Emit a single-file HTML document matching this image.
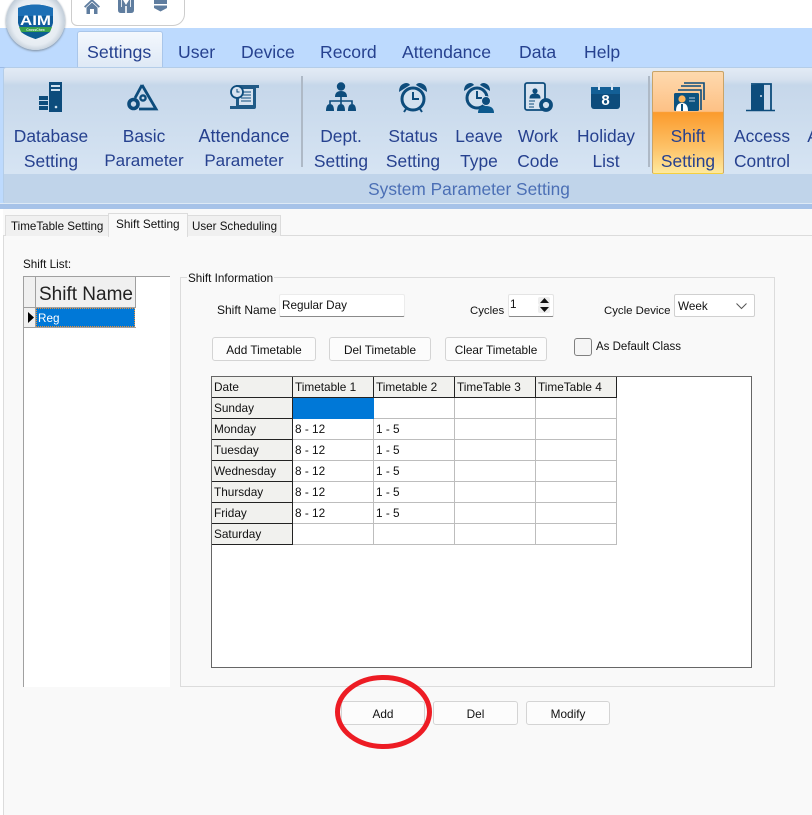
<!DOCTYPE html>
<html><head><meta charset="utf-8">
<style>
html,body{margin:0;padding:0}
body{width:812px;height:815px;position:relative;overflow:hidden;background:#fff;font-family:"Liberation Sans",sans-serif;color:#111}
.a{position:absolute;box-sizing:border-box}
.t{position:absolute;white-space:nowrap;font-size:11.7px;line-height:18px;margin-top:0}
.rt{position:absolute;white-space:nowrap;font-size:17.4px;line-height:20px;color:#26418f;text-align:center;transform:translateX(-50%)}
.mt{position:absolute;white-space:nowrap;font-size:17.6px;line-height:22px;color:#26418f;top:41px}
.btn{position:absolute;box-sizing:border-box;background:#fcfcfc;border:1px solid #d4d4d4;border-radius:3px;font-size:11.8px;text-align:center;color:#111;white-space:nowrap}
svg{position:absolute;overflow:visible}
table{position:absolute;left:212px;top:377px;border-collapse:separate;border-spacing:0;table-layout:fixed;width:405px}
td{box-sizing:border-box;width:81px;height:21px;padding:0 0 0 2px;font-size:11.8px;line-height:20px;border-right:1px solid #bdbdbd;border-bottom:1px solid #bdbdbd;background:#fff;white-space:nowrap;overflow:hidden}
td.h{background:#f1f1ee;border-right:1px solid #222;border-bottom:1px solid #222}
</style></head><body>

<!-- top band -->
<div class="a" style="left:71px;top:-6px;width:114px;height:32px;background:#fff;border:1px solid #cdcdcd;border-radius:0 0 12px 6px"></div>
<div class="a" style="left:0;top:28px;width:812px;height:181px;background:#bddafe"></div>
<div class="a" style="left:0;top:67px;width:812px;height:1px;background:#9dbbe6"></div>
<!-- qat icons -->
<svg style="left:84px;top:0" width="16" height="14" viewBox="0 0 16 14"><path d="M0 6.500 8-1l8 7.500-1.300 1.200L8 1.500 1.300 7.700z" fill="#5f7d9f"/><path d="M2.500 7.500 8 2.500l5.500 5V14H10V9H6v5H2.500z" fill="#5f7d9f"/></svg>
<svg style="left:118px;top:0" width="16" height="14" viewBox="0 0 16 14"><path d="M0 0h5l3 5 3-5h5v10q0 3-3 3H3q-3 0-3-3z" fill="#5f7d9f"/><path d="M7 6h2v7H7zM3 0h1v7H3zM12 0h1v7h-1z" fill="#dfe6ee"/></svg>
<svg style="left:154px;top:0" width="13" height="12" viewBox="0 0 13 12"><path d="M0 0h13v4H0zM0 5.500h13V8l-6.500 3.500L0 8z" fill="#5f7d9f"/></svg>

<!-- Settings tab -->
<div class="a" style="left:77px;top:31px;width:86px;height:38px;border:1px solid #a9c6ea;border-bottom:none;border-radius:3px 3px 0 0;background:linear-gradient(#f4f8fd,#dde8f5)"></div>
<div class="mt" style="left:87px;font-size:17.8px">Settings</div>
<div class="mt" style="left:178px">User</div>
<div class="mt" style="left:241px">Device</div>
<div class="mt" style="left:320px">Record</div>
<div class="mt" style="left:402px">Attendance</div>
<div class="mt" style="left:519px">Data</div>
<div class="mt" style="left:584px">Help</div>

<!-- logo -->
<div class="a" style="left:6px;top:-9px;width:59px;height:59px;border-radius:50%;background:radial-gradient(circle at 50% 52%,#f6f8fa 0,#e6ecf2 55%,#a4b4c4 82%,#7e8fa0 100%);box-shadow:0 1px 2px #7d8c9c"></div>
<svg style="left:18px;top:3px" width="35" height="36" viewBox="0 0 35 36">
<path d="M0 5Q17-2 35 5V20Q33 30 17.500 36 2 30 0 20z" fill="#0f5c9c"/>
<path d="M0 5Q17-2 35 5V13H0z" fill="#1c6fb5"/>
<path d="M1 24h33l-2 5H3z" fill="#3aa14c"/>
<path d="M3 29h29q-5 4-14.500 7Q8 33 3 29z" fill="#0c5d92"/>
<text x="17.500" y="22" font-size="14" font-weight="700" text-anchor="middle" textLength="31" lengthAdjust="spacingAndGlyphs" fill="#fff" font-family="Liberation Sans">AIM</text>
<text x="17.500" y="28" font-size="3.500" font-weight="700" text-anchor="middle" fill="#e8f5e8" font-family="Liberation Sans">CrossChex</text>
</svg>

<!-- ribbon -->
<div class="a" style="left:3px;top:67px;width:815px;height:137px;border:1px solid #b4cde8;border-radius:3px;background:linear-gradient(#e3ebf5 0,#d7e2ef 11px,#c6d7ea 17px,#d6e4f3 105px);overflow:hidden">
 <div class="a" style="left:0;top:106px;width:100%;height:30px;background:#c0d4ea"></div>
</div>
<div class="a" style="left:0;top:203px;width:812px;height:1px;background:#dde9f5"></div>
<div class="a" style="left:0;top:204px;width:812px;height:5px;background:#a6c2e8"></div>
<div class="a" style="left:301px;top:76px;width:2px;height:91px;background:#aeb9c6"></div>
<div class="a" style="left:648px;top:76px;width:2px;height:91px;background:#aeb9c6"></div>
<!-- highlight -->
<div class="a" style="left:652px;top:71px;width:72px;height:103px;border:1px solid #c9a468;border-bottom:1px solid #f5cf3f;border-radius:2px;background:linear-gradient(#fed9ae 0,#fdc185 39%,#fb9b2d 40%,#fdc268 75%,#fee99d 100%)"></div>

<!-- ribbon icons -->
<svg style="left:39px;top:82px" width="24" height="31" viewBox="0 0 24 31"><path d="M10 0h13v30H10z" fill="#0d4c7c"/><path d="M12 3h9v2h-9zM12 7h9v2h-9z" fill="#cfe0ee"/><circle cx="17" cy="25" r="1.300" fill="#cfe0ee"/><path d="M0 14h9v4H0zM0 19h9v4H0zM0 24h9v4H0z" fill="#0d4c7c"/></svg>
<svg style="left:127px;top:83px" width="31" height="30" viewBox="0 0 31 30"><path d="M15 2 29 26H12" fill="none" stroke="#0d4c7c" stroke-width="2.800"/><path d="M15 2 8 15" fill="none" stroke="#0d4c7c" stroke-width="2.800"/><circle cx="6.500" cy="21" r="4.500" fill="#c9d9ea" stroke="#0d4c7c" stroke-width="3.600"/><circle cx="16" cy="15" r="2.600" fill="#c9d9ea" stroke="#0d4c7c" stroke-width="2.400"/></svg>
<svg style="left:229px;top:84px" width="31" height="26" viewBox="0 0 31 26"><path d="M7 1h23v3h-3v19q0 2-2 2H1v-3h6z" fill="#0d4c7c" opacity=".9"/><path d="M10 5h14v16H10z" fill="#d7e3f0"/><path d="M12 8h10M12 11h10M12 14h10M12 17h10" stroke="#0d4c7c"/><circle cx="8" cy="8" r="6" fill="#d7e3f0" stroke="#0d4c7c" stroke-width="1.800"/><path d="M8 5v3h2.500" fill="none" stroke="#0d4c7c"/></svg>
<svg style="left:326px;top:82px" width="30" height="30" viewBox="0 0 30 30"><circle cx="15" cy="4.500" r="4.200" fill="#0d4c7c"/><path d="M9 15q0-6 6-6t6 6z" fill="#0d4c7c"/><path d="M15 14v6M4 22v-3h22v3M15 19v3" fill="none" stroke="#0d4c7c" stroke-width="1.600"/><path d="M0 29q0-7 4-7t4 7zM11 29q0-7 4-7t4 7zM22 29q0-7 4-7t4 7z" fill="#0d4c7c"/></svg>
<svg style="left:398px;top:82px" width="30" height="31" viewBox="0 0 30 31"><circle cx="15" cy="17" r="11" fill="#d3e1ef" stroke="#0d4c7c" stroke-width="3"/><path d="M15 10v7h6" fill="none" stroke="#0d4c7c" stroke-width="2"/><path d="M1 10Q1 2 8 1q3 0 4 2zM29 10q0-8-7-9-3 0-4 2z" fill="#0d4c7c"/><path d="M8 27l-2 3M22 27l2 3" stroke="#0d4c7c" stroke-width="2"/></svg>
<svg style="left:463px;top:82px" width="31" height="31" viewBox="0 0 31 31"><circle cx="14" cy="16" r="10" fill="#d3e1ef" stroke="#0d4c7c" stroke-width="3"/><path d="M14 9v7h5" fill="none" stroke="#0d4c7c" stroke-width="2"/><path d="M1 9Q1 2 7 1q3 0 4 2zM27 9q0-7-6-8-3 0-4 2z" fill="#0d4c7c"/><circle cx="23" cy="19" r="4.500" fill="#0d4c7c" stroke="#d3e1ef"/><path d="M15 31q0-7 8-7t8 7z" fill="#0d5a8e"/></svg>
<svg style="left:524px;top:82px" width="32" height="31" viewBox="0 0 32 31"><rect x="1" y="1" width="20" height="27" rx="2" fill="#d7e3f0" stroke="#0d4c7c" stroke-width="1.800"/><circle cx="11" cy="9" r="2.600" fill="#0d4c7c"/><path d="M6 16q0-4 5-4t5 4zM5 19h6M5 22h5M5 25h5" fill="#0d4c7c" stroke="#0d4c7c"/><circle cx="22" cy="23" r="5" fill="#d3e1ef" stroke="#0d4c7c" stroke-width="3.800"/></svg>
<svg style="left:590px;top:83px" width="31" height="27" viewBox="0 0 31 27"><rect x="1" y="4" width="29" height="22" rx="3" fill="#0d4c7c"/><path d="M1 4h29v7H1z" fill="#135f96"/><path d="M9 0v7M22 0v7" stroke="#d7e3f0" stroke-width="2"/><text x="15.500" y="22" font-size="15" font-weight="700" text-anchor="middle" fill="#fff" font-family="Liberation Sans">8</text></svg>
<svg style="left:673px;top:83px" width="32" height="29" viewBox="0 0 32 29"><path d="M11 0h20v17M8 3h20" fill="none" stroke="#0d4c7c" stroke-width="1.600"/><path d="M5 7h23v20" fill="none" stroke="#0d4c7c" stroke-width="1.600"/><rect x="1" y="10" width="25" height="18" rx="1.500" fill="#0d527f"/><circle cx="9" cy="16" r="3.600" fill="#fdb45c"/><path d="M3 28q0-8 6-8t6 8z" fill="#fff"/><path d="M9 21v7" stroke="#0d527f" stroke-width="2"/><path d="M16 15h6M16 18h6" stroke="#bcd" /></svg>
<svg style="left:746px;top:83px" width="30" height="29" viewBox="0 0 30 29"><path d="M5 27V2l13-1v26z" fill="#0d4c7c"/><path d="M5 1h20v26" fill="none" stroke="#0d4c7c" stroke-width="1.800"/><path d="M0 27.500h29" stroke="#0d4c7c" stroke-width="1.600"/><circle cx="15" cy="13" r="1" fill="#d7e3f0"/></svg>

<!-- ribbon text -->
<div class="rt" style="left:51px;top:126px">Database</div><div class="rt" style="left:51px;top:151px">Setting</div>
<div class="rt" style="left:144px;top:126px">Basic</div><div class="rt" style="left:144px;top:151px;font-size:17px">Parameter</div>
<div class="rt" style="left:244px;top:126px;font-size:18px">Attendance</div><div class="rt" style="left:244px;top:151px;font-size:17px">Parameter</div>
<div class="rt" style="left:341px;top:126px">Dept.</div><div class="rt" style="left:341px;top:151px">Setting</div>
<div class="rt" style="left:413px;top:126px">Status</div><div class="rt" style="left:413px;top:151px">Setting</div>
<div class="rt" style="left:479px;top:126px">Leave</div><div class="rt" style="left:479px;top:151px">Type</div>
<div class="rt" style="left:538px;top:126px">Work</div><div class="rt" style="left:538px;top:151px">Code</div>
<div class="rt" style="left:606px;top:126px">Holiday</div><div class="rt" style="left:606px;top:151px">List</div>
<div class="rt" style="left:688px;top:126px">Shift</div><div class="rt" style="left:688px;top:151px">Setting</div>
<div class="rt" style="left:762px;top:126px">Access</div><div class="rt" style="left:762px;top:151px">Control</div>
<div class="rt" style="left:813px;top:126px">A</div>
<div class="rt" style="left:469px;top:179px;color:#4b6fb5;font-size:17.3px">System Parameter Setting</div>

<!-- content -->
<div class="a" style="left:0;top:209px;width:812px;height:606px;background:#fff"></div>
<div class="a" style="left:3px;top:209px;width:809px;height:606px;background:#f9f9f9"></div>
<div class="a" style="left:3px;top:235px;width:809px;height:1px;background:#dcdcdc"></div>
<div class="a" style="left:3px;top:235px;width:1px;height:580px;background:#dcdcdc"></div>
<div class="a" style="left:5px;top:215px;width:104px;height:21px;background:#f0f0f0;border:1px solid #dcdcdc;border-bottom:none"></div>
<div class="a" style="left:187px;top:215px;width:94px;height:21px;background:#f0f0f0;border:1px solid #dcdcdc;border-bottom:none"></div>
<div class="a" style="left:108px;top:213px;width:80px;height:24px;background:#f9f9f9;border:1px solid #dcdcdc;border-bottom:none"></div>
<div class="t" style="left:11px;top:218px;font-size:11.6px">TimeTable Setting</div>
<div class="t" style="left:116px;top:215px;font-size:11.8px">Shift Setting</div>
<div class="t" style="left:192px;top:218px;font-size:11.6px">User Scheduling</div>

<!-- shift list -->
<div class="t" style="left:23px;top:256px">Shift List:</div>
<div class="a" style="left:23px;top:276px;width:147px;height:411px;background:#fff;border-left:1px solid #a0a0a0;border-top:1px solid #a0a0a0"></div>
<div class="a" style="left:24px;top:277px;width:12px;height:50px;background:#f0f0f0;border-right:1px solid #a0a0a0"></div>
<div class="a" style="left:36px;top:277px;width:100px;height:30px;background:#f0f0f0;border-right:1px solid #a0a0a0"></div>
<div class="a" style="left:24px;top:307px;width:112px;height:1px;background:#a0a0a0"></div>
<div class="a" style="left:24px;top:327px;width:112px;height:1px;background:#a0a0a0"></div>
<div class="t" style="left:39px;top:284px;font-size:19px;line-height:22px;color:#222">Shift Name</div>
<div class="a" style="left:36px;top:308px;width:99px;height:19px;background:#0078d7;outline:1px dotted #e8913a;outline-offset:-1px"></div>
<div class="t" style="left:38px;top:310px;color:#fff">Reg</div>
<svg style="left:28px;top:312px" width="6" height="11"><path d="M0 0 6 5.500 0 11z" fill="#000"/></svg>

<!-- group -->
<div class="a" style="left:180px;top:277px;width:595px;height:410px;border:1px solid #dcdcdc"></div>
<div class="t" style="left:187px;top:270px;background:#f9f9f9;padding:0 1px;line-height:16px;height:16px"><span style="position:relative;top:1px">Shift Information</span></div>
<div class="t" style="left:217px;top:301px;font-size:12px">Shift Name</div>
<div class="a" style="left:279px;top:294px;width:126px;height:23px;background:#fff;border:1px solid #ececec;border-bottom:1px solid #8a8a8a;border-radius:2px"></div>
<div class="t" style="left:282px;top:297px">Regular Day</div>
<div class="t" style="left:470px;top:302px;font-size:11.4px">Cycles</div>
<div class="a" style="left:508px;top:294px;width:46px;height:23px;background:#fff;border:1px solid #e4e4e4;border-bottom:1px solid #8a8a8a;border-radius:2px"></div>
<div class="t" style="left:510px;top:296px">1</div>
<div class="a" style="left:538px;top:297px;width:12px;height:8px;background:#eee;border-radius:2px"></div>
<div class="a" style="left:538px;top:305px;width:12px;height:8px;background:#eee;border-radius:2px"></div>
<svg style="left:540px;top:298px" width="9" height="14"><path d="M0 5 4.500 0 9 5zM0 9h9l-4.500 5z" fill="#111"/></svg>
<div class="t" style="left:604px;top:302px;font-size:11.4px">Cycle Device</div>
<div class="a" style="left:674px;top:294px;width:81px;height:23px;background:#fff;border:1px solid #d0d0d0;border-radius:2px"></div>
<div class="t" style="left:678px;top:298px">Week</div>
<svg style="left:736px;top:303px" width="11" height="7"><path d="M.5.500 5.500 5.500 10.500.5" fill="none" stroke="#555" stroke-width="1"/></svg>

<div class="btn" style="left:212px;top:337px;width:104px;height:24px;line-height:24px">Add Timetable</div>
<div class="btn" style="left:329px;top:337px;width:102px;height:24px;line-height:24px">Del Timetable</div>
<div class="btn" style="left:445px;top:337px;width:102px;height:24px;line-height:24px">Clear Timetable</div>
<div class="a" style="left:574px;top:338px;width:18px;height:18px;background:#f5f5f5;border:1px solid #808080;border-radius:3px"></div>
<div class="t" style="left:596px;top:338px;font-size:11.5px">As Default Class</div>

<!-- grid -->
<div class="a" style="left:211px;top:376px;width:541px;height:292px;background:#fff;border:1px solid #666"></div>
<table>
<tr><td class="h">Date</td><td class="h">Timetable 1</td><td class="h">Timetable 2</td><td class="h">TimeTable 3</td><td class="h">TimeTable 4</td></tr>
<tr><td class="h">Sunday</td><td style="background:#0078d7;border-color:#0078d7"></td><td></td><td></td><td></td></tr>
<tr><td class="h">Monday</td><td>8 - 12</td><td>1 - 5</td><td></td><td></td></tr>
<tr><td class="h">Tuesday</td><td>8 - 12</td><td>1 - 5</td><td></td><td></td></tr>
<tr><td class="h">Wednesday</td><td>8 - 12</td><td>1 - 5</td><td></td><td></td></tr>
<tr><td class="h">Thursday</td><td>8 - 12</td><td>1 - 5</td><td></td><td></td></tr>
<tr><td class="h">Friday</td><td>8 - 12</td><td>1 - 5</td><td></td><td></td></tr>
<tr><td class="h">Saturday</td><td></td><td></td><td></td><td></td></tr>
</table>

<!-- bottom buttons -->
<div class="btn" style="left:341px;top:701px;width:84px;height:24px;line-height:24px">Add</div>
<div class="btn" style="left:433px;top:701px;width:85px;height:24px;line-height:24px">Del</div>
<div class="btn" style="left:526px;top:701px;width:84px;height:24px;line-height:24px">Modify</div>
<svg style="left:0;top:0" width="812" height="815"><ellipse cx="383.500" cy="712" rx="46" ry="34.500" fill="none" stroke="#ed1c24" stroke-width="5"/></svg>
</body></html>
